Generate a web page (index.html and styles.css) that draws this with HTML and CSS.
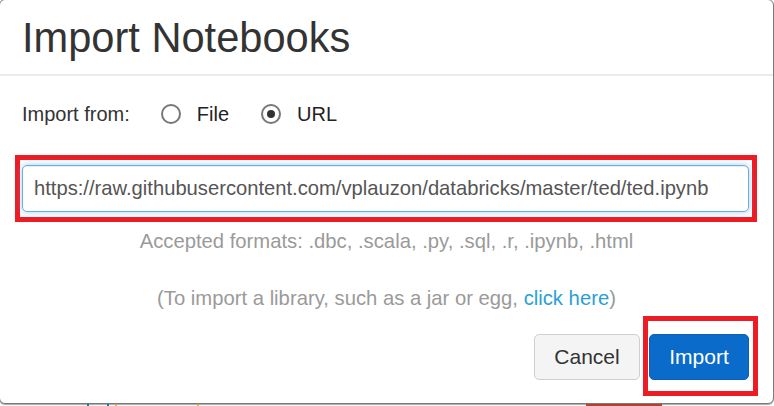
FILE: index.html
```html
<!DOCTYPE html>
<html lang="en">
<head>
<meta charset="utf-8">
<title>Import Notebooks</title>
<link rel="stylesheet" href="styles.css">
</head>
<body>
<div class="modal">
  <div class="modal-header">
    <h1 class="title">Import Notebooks</h1>
  </div>
  <div class="modal-body">
    <div class="source-row">
      <span class="source-label">Import from:</span>
      <label class="radio"><span class="radio-ring"></span><span>File</span></label>
      <label class="radio"><span class="radio-ring checked"></span><span>URL</span></label>
    </div>
    <div class="highlight url-box">
      <input class="url-input" type="text" value="https://raw.githubusercontent.com/vplauzon/databricks/master/ted/ted.ipynb">
    </div>
    <p class="hint">Accepted formats: .dbc, .scala, .py, .sql, .r, .ipynb, .html</p>
    <p class="hint library">(To import a library, such as a jar or egg, <a class="link">click here</a>)</p>
  </div>
  <div class="modal-footer">
    <button class="btn btn-default">Cancel</button>
    <div class="highlight import-box">
      <button class="btn btn-primary">Import</button>
    </div>
  </div>
</div>
<div class="backdrop-peek">
  <span class="peek peek-teal p1"></span>
  <span class="peek peek-teal p2"></span>
  <span class="peek peek-yellow p3"></span>
  <span class="peek peek-yellow p4"></span>
  <span class="peek peek-red p5"></span>
</div>
</body>
</html>
```

FILE: styles.css
```css
html, body {
  margin: 0;
  padding: 0;
  background: #fff;
  overflow: hidden;
}

body {
  width: 774px;
  height: 406px;
  font-family: "Liberation Sans", Arial, sans-serif;
  color: #333;
}

.modal {
  box-sizing: border-box;
  width: 775px;
  height: 405px;
  margin: -1px 0 0 -1px;
  border: 1px solid #7a7a7a;
  border-radius: 6px;
  background: #fff;
  box-shadow: 0 1px 1px rgba(0, 0, 0, 0.35);
  display: flex;
  flex-direction: column;
}

.modal-header {
  padding: 15px 22px 13px;
  border-bottom: 2px solid #ebebeb;
}

.title {
  margin: 0;
  font-size: 41.6px;
  line-height: 46px;
  font-weight: 400;
  color: #333;
}

.modal-body {
  padding: 26px 21px 0;
}

.source-row {
  display: flex;
  align-items: center;
  height: 24px;
  margin-left: 1px;
  font-size: 20px;
  line-height: 24px;
  color: #333;
}

.source-label {
  margin-right: 31px;
}

.radio {
  display: flex;
  align-items: center;
  gap: 16px;
  margin-right: 32px;
  color: #222;
}

.radio-ring {
  box-sizing: border-box;
  width: 20px;
  height: 20px;
  border: 2px solid #777;
  border-radius: 50%;
  display: flex;
  align-items: center;
  justify-content: center;
  background: #fff;
}

.radio-ring.checked::after {
  content: "";
  width: 8px;
  height: 8px;
  border-radius: 50%;
  background: #333;
}

.highlight {
  box-sizing: border-box;
  border: 5px solid #ed1c24;
}

.url-box {
  width: 742px;
  margin: 29px 0 0 -6px;
  padding: 5px 3px 5px 2px;
}

.url-input {
  display: block;
  box-sizing: border-box;
  width: 727px;
  height: 47px;
  margin: 0;
  padding: 0 11px;
  border: 1px solid #66afe9;
  border-radius: 5px;
  font-family: "Liberation Sans", Arial, sans-serif;
  font-size: 20.2px;
  color: #555;
  background: #fff;
  outline: none;
  box-shadow: inset 0 1px 1px rgba(0, 0, 0, 0.075), 0 0 6px rgba(102, 175, 233, 0.6);
}

.hint {
  margin: 7px 0 0;
  text-align: center;
  font-size: 20.25px;
  line-height: 24px;
  color: #9a9a9a;
}

.hint.library {
  margin-top: 33px;
}

.link {
  color: #2a9fd6;
  text-decoration: none;
}

.modal-footer {
  display: flex;
  justify-content: flex-end;
  align-items: flex-start;
  gap: 3px;
  margin-top: 6px;
  padding-right: 15px;
}

.import-box {
  padding: 13px 4px 11px 1px;
}

.btn {
  display: block;
  box-sizing: border-box;
  height: 46px;
  margin: 0;
  padding: 0;
  border: 1px solid;
  border-radius: 5px;
  font-family: "Liberation Sans", Arial, sans-serif;
  font-size: 21px;
}

.btn-default {
  width: 106px;
  margin-top: 18px;
  background: #f4f4f4;
  border-color: #cfcfcf;
  color: #333;
}

.btn-primary {
  width: 100px;
  background: #0a6bcb;
  border-color: #0b5fb6;
  color: #fff;
}

.backdrop-peek {
  display: flex;
  height: 2px;
}

.peek {
  display: block;
  height: 2px;
}

.peek-teal { background: #1f7b8c; }
.peek-yellow { background: #e0b33a; }
.peek-red { background: #b5402f; }

.p1 { width: 2px; margin-left: 87px; }
.p2 { width: 2px; margin-left: 18px; }
.p3 { width: 2px; margin-left: 6px; }
.p4 { width: 2px; margin-left: 80px; }
.p5 { width: 76px; margin-left: 387px; }
```
